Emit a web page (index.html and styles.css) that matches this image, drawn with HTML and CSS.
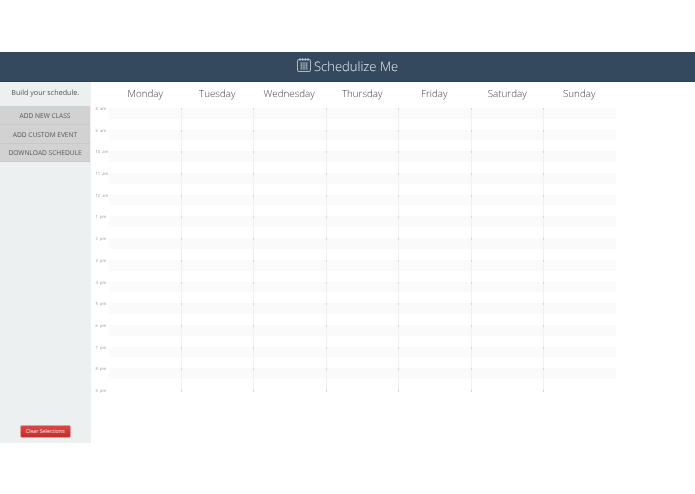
FILE: index.html
```html
<!DOCTYPE html>
<html lang="en">
<head>
<meta charset="utf-8">
<title>Schedulize Me</title>
<link rel="stylesheet" href="styles.css">
</head>
<body>
<div class="top-gap"></div>
<header class="header">
  <svg class="logo" width="14" height="14" viewBox="0 0 14 14" fill="none" stroke="#cfd7de" stroke-width="0.8">
    <rect x="0.5" y="1.5" width="13" height="12" rx="1.5"/>
    <path d="M3 0v3M5.7 0v3M8.3 0v3M11 0v3"/>
    <path d="M3 5h8M3 7h8M3 9h8M3 11h8M4.6 4.5v7M7 4.5v7M9.4 4.5v7" stroke-width="0.6" opacity="0.8"/>
  </svg>
  <span class="brand">Schedulize Me</span>
</header>
<div class="main">
  <aside class="sidebar">
    <p class="tagline">Build your schedule.</p>
    <div class="actions">
      <div class="action">ADD NEW CLASS</div>
      <div class="action">ADD CUSTOM EVENT</div>
      <div class="action">DOWNLOAD SCHEDULE</div>
    </div>
    <button class="clear">Clear Selections</button>
  </aside>
  <section class="calendar">
    <div class="days">
      <div class="day">Monday</div><div class="day">Tuesday</div><div class="day">Wednesday</div><div class="day">Thursday</div><div class="day">Friday</div><div class="day">Saturday</div><div class="day">Sunday</div>
    </div>
    <div class="rows" id="rows"></div>
  </section>
</div>
<script src="app.js"></script>
</body>
</html>
```
FILE: app.js
```js
var hours = ["8 am","9 am","10 am","11 am","12 am","1 pm","2 pm","3 pm","4 pm","5 pm","6 pm","7 pm","8 pm","9 pm"];
var rows = document.getElementById("rows");
hours.forEach(function (h, i) {
  var row = document.createElement("div");
  row.className = "row" + (i === hours.length - 1 ? " last" : "");
  var label = document.createElement("div");
  label.className = "hour";
  label.textContent = h;
  row.appendChild(label);
  for (var d = 0; d < 7; d++) {
    var cell = document.createElement("div");
    cell.className = "cell";
    row.appendChild(cell);
  }
  rows.appendChild(row);
});
```
FILE: styles.css
```css
html, body {
  margin: 0;
  padding: 0;
  background: #fff;
  font-family: "Open Sans", "Liberation Sans", sans-serif;
  text-rendering: geometricPrecision;
}
.top-gap { height: 52px; }
.header {
  height: 30px;
  background: #34495e;
  border-bottom: 1px solid #2c3e50;
  box-sizing: border-box;
  display: flex;
  align-items: center;
  justify-content: center;
  gap: 3.5px;
}
.logo { flex: none; margin-bottom: 3px; }
.brand {
  color: #e6ebef;
  font-size: 13px;
  font-weight: 300;
  line-height: 26px;
  margin-bottom: 2px;
  will-change: transform;
}
.main { display: flex; height: 361px; }
.sidebar {
  width: 90.5px;
  flex: none;
  background: #ecf0f1;
  display: flex;
  flex-direction: column;
}
.tagline {
  margin: 0;
  height: 24px;
  line-height: 22px;
  text-align: center;
  font-size: 7.2px;
  color: #555;
  will-change: transform;
}
.actions {
  display: flex;
  flex-direction: column;
  background: #d2d2d2;
  margin-right: 0.5px;
}
.action {
  height: 18.67px;
  line-height: 20px;
  border-bottom: 1px solid #c8c8c8;
  box-sizing: border-box;
  text-align: center;
  font-size: 6.6px;
  color: #555;
  white-space: nowrap;
  will-change: transform;
}
.clear {
  margin: auto 0 5px 19.5px;
  width: 51.5px;
  height: 13px;
  padding: 0;
  border: 1px solid #e79a98;
  border-radius: 2px;
  background: linear-gradient(#dc4746, #bf2e2e);
  color: #f8e4e4;
  font-family: inherit;
  font-size: 5.3px;
  line-height: 11px;
}
.calendar { flex: 1; min-width: 0; }
.days {
  display: flex;
  height: 26px;
  padding-left: 18px;
}
.day {
  width: 72.43px;
  flex: none;
  text-align: center;
  font-size: 9.8px;
  font-weight: 300;
  line-height: 24px;
  color: #444;
  will-change: transform;
}
.row { display: flex; height: 21.7px; }
.hour {
  width: 18.5px;
  flex: none;
  padding-left: 4.5px;
  box-sizing: border-box;
  font-size: 4.1px;
  line-height: 3px;
  color: #999;
  white-space: pre;
  word-spacing: 1px;
  will-change: transform;
}
.cell {
  width: 72.43px;
  flex: none;
  box-sizing: border-box;
  background: linear-gradient(#fafafa 50%, #fff 50%);
  position: relative;
}
.cell + .cell::before {
  content: "";
  position: absolute;
  left: -0.6px;
  top: 0;
  bottom: 0;
  width: 1px;
  background: #f1f1f1;
}
.cell + .cell::after {
  content: "";
  position: absolute;
  left: -0.6px;
  top: 0;
  width: 1px;
  height: 2px;
  background: #d4d4d4;
}
.row.last { height: 2px; }
.row.last .cell { background: none; height: 2px; }
```
